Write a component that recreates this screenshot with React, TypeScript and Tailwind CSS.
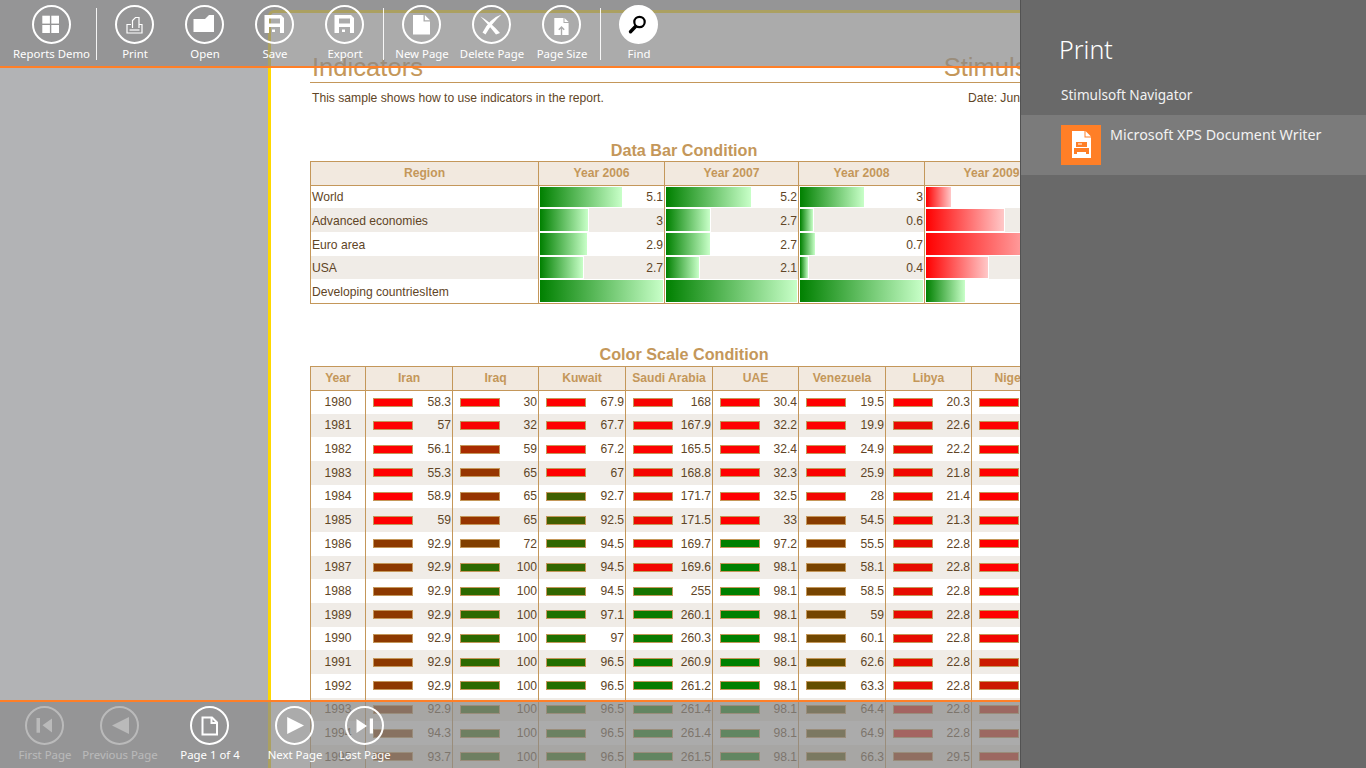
import React from "react";

const W = "#ffffff";

function Glyph({ name }: { name: string }) {
  const dim = "#ababab";
  switch (name) {
    case "grid":
      return (<g fill={W}><rect x="8.3" y="8.7" width="7.6" height="7.9" /><rect x="17.3" y="8.7" width="7.7" height="7.9" /><rect x="8.3" y="18" width="7.6" height="8" /><rect x="17.3" y="18" width="7.7" height="8" /></g>);
    case "print":
      return (<g fill="none" stroke={W} strokeWidth="1.2"><path d="M14 17.5H10V26H25V17.5H22" /><path d="M15.5 21V13.5L18.5 10.5H22V21" /><path d="M12.5 23H22.5" /></g>);
    case "folder":
      return <path fill={W} d="M6.5 12H18L22 8H27V25H6.5Z" />;
    case "save":
      return (<path fill={W} fillRule="evenodd" d="M7.5 8H24L27 11V26H7.5ZM12 11.5V16.5H23V11.5ZM12 20V26H15V22.5H18V25H15V26H23V20Z" />);
    case "page":
      return (<g fill={W}><path d="M9 8H19.5V14.5H26V27.5H9Z" /><path d="M20.8 8L26 13.2H20.8Z" /></g>);
    case "delete":
      return (<g fill={W}><path d="M27.5 7.5Q16 11 8.5 25.5L11.5 27.5Q18 16 27.5 7.5Z" /><path d="M6.5 9.5Q16 14.5 26 26L22 27.5Q14 17 6.5 9.5Z" /></g>);
    case "size":
      return (<g><path fill={W} d="M10.3 11H19.5V16H24.6V28H10.3Z" /><path fill={W} d="M20.5 11L24.6 15H20.5Z" /><path fill="none" stroke={dim} strokeWidth="1.4" d="M17.5 28V20.5M14.8 22.8L17.5 20L20.2 22.8" /></g>);
    case "find":
      return (<g fill="none" stroke="#000000"><circle cx="18.5" cy="15" r="5.2" strokeWidth="2.2" /><path d="M14.5 19.5L9.5 24.7" strokeWidth="3.4" strokeLinecap="round" /></g>);
    case "first":
      return (<g fill={W}><rect x="9.5" y="10" width="3.5" height="14.7" /><path d="M15.5 17.3L25 10.5V24.5Z" /></g>);
    case "prev":
      return <path fill={W} d="M10 17.5L27 9V26Z" />;
    case "pageline":
      return (<g fill="none" stroke={W} strokeWidth="2"><path d="M10.5 9.5H20L25 14.5V26.5H10.5Z" /><path d="M19.5 9.5V15H25" /></g>);
    case "next":
      return <path fill={W} d="M10.2 9L27 17.5L10.2 26Z" />;
    case "last":
      return (<g fill={W}><path d="M9.5 11L20 18L9.5 25Z" /><rect x="22.8" y="10.5" width="3.2" height="15" /></g>);
    default:
      return null;
  }
}

function Tool({ label, icon, cls, filled = false, dim = false, flush = false }: { label: string; icon: string; cls: string; filled?: boolean; dim?: boolean; flush?: boolean }) {
  return (
    <div className={`flex flex-none flex-col items-center ${cls} ${dim ? "opacity-35" : ""}`}>
      <div className={`w-[39px] h-[39px] flex-none rounded-full border-2 border-white ${filled ? "bg-white" : ""}`}>
        <svg viewBox="0 0 35 35" className="block w-[35px] h-[35px]"><Glyph name={icon} /></svg>
      </div>
      <div className={`mt-[2px] whitespace-nowrap text-[11.4px] leading-[16px] text-white ${flush ? "" : "pl-[2px]"}`}>{label}</div>
    </div>
  );
}

const Sep = ({ cls }: { cls: string }) => <div className={`flex-none w-px h-[52px] mt-[3px] bg-white/90 ${cls}`} />;

const BORDER = "border-[#c4975a]";

const t1Cols = ["w-[126px]", "w-[134px]", "w-[126px]", "w-[134px]"];
const t1Rows = [
  { name: "World", h: "h-[22px]", bg: "bg-white", cells: [[84, "5.1"], [87, "5.2"], [66, "3"], [27, ""]] },
  { name: "Advanced economies", h: "h-[24px]", bg: "bg-[#f0ece7]", cells: [[50, "3"], [46, "2.7"], [15, "0.6"], [80, ""]] },
  { name: "Euro area", h: "h-[24px]", bg: "bg-white", cells: [[49, "2.9"], [46, "2.7"], [17, "0.7"], [125, ""]] },
  { name: "USA", h: "h-[23px]", bg: "bg-[#f0ece7]", cells: [[45, "2.7"], [35, "2.1"], [10, "0.4"], [64, ""]] },
  { name: "Developing countriesItem", h: "h-[24px]", bg: "bg-white", cells: [[125, ""], [133, ""], [125, ""], [41, ""]] },
] as const;

const t2Widths = ["w-[87px]", "w-[86px]", "w-[87px]", "w-[87px]", "w-[86px]", "w-[87px]", "w-[86px]", "w-[87px]"];
const t2Heads = ["Iran", "Iraq", "Kuwait", "Saudi Arabia", "UAE", "Venezuela", "Libya", "Nigeria"];
const ranges: [number, number][] = [[62, 131], [30, 115], [68, 101], [165, 264], [33, 97], [25, 88], [20.5, 45], [0, 1]];
const nigeria = [0, 0, 0, 0, 0, 0, 0, 0, 0, 0, 0.05, 0.2, 0.2, 0.2, 0.2, 0.2];
const t2Data: number[][] = [
  [1980, 58.3, 30, 67.9, 168, 30.4, 19.5, 20.3],
  [1981, 57, 32, 67.7, 167.9, 32.2, 19.9, 22.6],
  [1982, 56.1, 59, 67.2, 165.5, 32.4, 24.9, 22.2],
  [1983, 55.3, 65, 67, 168.8, 32.3, 25.9, 21.8],
  [1984, 58.9, 65, 92.7, 171.7, 32.5, 28, 21.4],
  [1985, 59, 65, 92.5, 171.5, 33, 54.5, 21.3],
  [1986, 92.9, 72, 94.5, 169.7, 97.2, 55.5, 22.8],
  [1987, 92.9, 100, 94.5, 169.6, 98.1, 58.1, 22.8],
  [1988, 92.9, 100, 94.5, 255, 98.1, 58.5, 22.8],
  [1989, 92.9, 100, 97.1, 260.1, 98.1, 59, 22.8],
  [1990, 92.9, 100, 97, 260.3, 98.1, 60.1, 22.8],
  [1991, 92.9, 100, 96.5, 260.9, 98.1, 62.6, 22.8],
  [1992, 92.9, 100, 96.5, 261.2, 98.1, 63.3, 22.8],
  [1993, 92.9, 100, 96.5, 261.4, 98.1, 64.4, 22.8],
  [1994, 94.3, 100, 96.5, 261.4, 98.1, 64.9, 22.8],
  [1995, 93.7, 100, 96.5, 261.5, 98.1, 66.3, 29.5],
];

function scale(t: number) {
  const c = Math.max(0, Math.min(1, t));
  return `rgb(${Math.round(255 * (1 - c))},${Math.round(128 * c)},0)`;
}

function DataBarTable() {
  return (
    <div className={`flex-none w-[749px] border-t border-b border-r ${BORDER} text-[12.13px] text-[#5f4526]`}>
      <div className={`flex h-[24px] border-b ${BORDER} bg-[#f2e9df] font-bold text-[#c4975a]`}>
        <div className={`w-[228px] flex-none border-l ${BORDER} flex items-center justify-center`}>Region</div>
        {["Year 2006", "Year 2007", "Year 2008", "Year 2009"].map((y, i) => (
          <div key={y} className={`${t1Cols[i]} flex-none border-l ${BORDER} flex items-center justify-center`}>{y}</div>
        ))}
      </div>
      {t1Rows.map((r, ri) => (
        <div key={r.name} className={`flex ${r.h} ${r.bg}`}>
          <div className={`w-[228px] flex-none border-l ${BORDER} pl-px flex items-center`}>
            <span className={ri > 0 ? "pt-[2px]" : ""}>{r.name}</span>
          </div>
          {r.cells.map((c, ci) => (
            <div key={ci} className={`${t1Cols[ci]} flex-none border-l ${BORDER} flex justify-between items-center pr-px`}>
              <div
                className={`h-full flex-none border border-white bg-linear-to-r/srgb ${ci === 3 && ri < 4 ? "from-[#ff0000] to-[#ffc8c8]" : "from-[#008000] to-[#c8ffc8]"}`}
                style={{ width: c[0] }}
              />
              <span className={ri > 0 ? "pt-[2px]" : ""}>{c[1]}</span>
            </div>
          ))}
        </div>
      ))}
    </div>
  );
}

function ColorScaleTable() {
  return (
    <div className={`flex-none w-[749px] border-t border-r ${BORDER} text-[12.13px] text-[#5f4526]`}>
      <div className={`flex h-[24px] border-b ${BORDER} bg-[#f2e9df] font-bold text-[#c4975a]`}>
        <div className={`w-[55px] flex-none border-l ${BORDER} flex items-center justify-center`}>Year</div>
        {t2Heads.map((h, i) => (
          <div key={h} className={`${t2Widths[i]} flex-none border-l ${BORDER} flex items-center justify-center`}>{h}</div>
        ))}
      </div>
      {t2Data.map((row, ri) => (
        <div key={row[0]} className={`flex ${ri === 0 ? "h-[22.67px]" : "h-[23.67px]"} ${ri % 2 ? "bg-[#f0ece7]" : "bg-white"}`}>
          <div className={`w-[55px] flex-none border-l ${BORDER} flex items-center justify-center`}>{row[0]}</div>
          {t2Heads.map((h, ci) => {
            const v = row[ci + 1];
            const [lo, hi] = ranges[ci];
            const t = ci === 7 ? nigeria[ri] : (v - lo) / (hi - lo);
            return (
              <div key={h} className={`${t2Widths[ci]} flex-none border-l ${BORDER} flex items-center justify-between pl-[7px] pr-px`}>
                <div className={`w-[40px] h-[9px] flex-none border ${BORDER}`} style={{ backgroundColor: scale(t) }} />
                <span>{v}</span>
              </div>
            );
          })}
        </div>
      ))}
    </div>
  );
}

function Report() {
  return (
    <div className="flex-1 min-w-0 mt-[10px] bg-white border-l-[3px] border-t-[3px] border-[#ffd800] rounded-tl-[6px] overflow-hidden pl-[39px] pt-[39px] font-['Liberation_Sans',Arial,sans-serif]">
      <div className={`w-[746px] h-[31px] pl-[2px] border-b ${BORDER} flex justify-between text-[25.6px] leading-[30px] text-[#c4975a]`}>
        <span>Indicators</span>
        <span>Stimulsoft</span>
      </div>
      <div className="w-[748px] h-[30px] pl-[2px] pr-px flex justify-between text-[12.13px] leading-[30px] text-[#5f4526]">
        <span>This sample shows how to use indicators in the report.</span>
        <span>Date: June 2013</span>
      </div>
      <div className="w-[748px] mt-[27px] h-[20px] text-center text-[16.2px] leading-[20px] font-bold text-[#c4975a]">Data Bar Condition</div>
      <div className="mt-px"><DataBarTable /></div>
      <div className="w-[748px] mt-[40px] h-[20px] text-center text-[16.2px] leading-[20px] font-bold text-[#c4975a]">Color Scale Condition</div>
      <div className="mt-[2px]"><ColorScaleTable /></div>
    </div>
  );
}

function Flyout() {
  return (
    <div className="absolute right-0 top-0 bottom-0 w-[346px] bg-[#696969] border-l border-[#525252] text-white font-['Noto_Sans',sans-serif]">
      <div className="pl-[38px] pt-[31px] text-[25px] leading-[36px] font-light">Print</div>
      <div className="pl-[40px] mt-[18px] text-[13.6px] leading-[20px] text-[#f2f2f2]">Stimulsoft Navigator</div>
      <div className="mt-[10px] h-[60px] bg-[#7b7b7b] flex pl-[40px] pt-[10px]">
        <div className="w-[40px] h-[40px] flex-none bg-[#ff7f27]">
          <svg viewBox="0 0 40 40" className="block w-[40px] h-[40px]">
            <path fill="#ffffff" d="M11 6H23.5V12.5H30V33H11Z" />
            <path fill="#ffffff" d="M24.5 6L30 11.5H24.5Z" />
            <path fill="#ff7f27" d="M15 17H26V22H15ZM13 23H28V29H25V27H16V29H13Z" />
            <path fill="#ffffff" d="M17 18.5H21V19.5H17Z" />
          </svg>
        </div>
        <div className="ml-[9px] text-[14.3px] leading-[20px] text-[#f2f2f2] whitespace-nowrap">Microsoft XPS Document Writer</div>
      </div>
    </div>
  );
}

export default function App() {
  return (
    <div className="relative w-[1366px] h-[768px] overflow-hidden bg-[#b2b3b5] flex">
      <div className="w-[268px] flex-none" />
      <Report />

      <div className="absolute left-0 right-0 top-0 h-[68px] border-b-2 border-[#ff7f27] bg-[rgba(136,136,136,0.71)] flex pt-[5px] font-['Noto_Sans',sans-serif]">
        <Tool label="Reports Demo" icon="grid" cls="w-[77px] ml-[13px]" flush />
        <Sep cls="ml-[6px] mr-[2px]" />
        <Tool label="Print" icon="print" cls="w-[70px]" />
        <Tool label="Open" icon="folder" cls="w-[70px]" />
        <Tool label="Save" icon="save" cls="w-[70px]" />
        <Tool label="Export" icon="save" cls="w-[70px]" />
        <Sep cls="ml-[4px] mr-[2px]" />
        <Tool label="New Page" icon="page" cls="w-[70px]" />
        <Tool label="Delete Page" icon="delete" cls="w-[70px]" />
        <Tool label="Page Size" icon="size" cls="w-[70px]" />
        <Sep cls="ml-[4px] mr-[2px]" />
        <Tool label="Find" icon="find" cls="w-[70px]" filled />
      </div>

      <div className="absolute left-0 right-0 bottom-0 h-[68px] border-t-2 border-[#ff7f27] bg-[rgba(136,136,136,0.71)] flex pt-[4px] pl-[9px] font-['Noto_Sans',sans-serif]">
        <Tool label="First Page" icon="first" cls="w-[70px]" dim />
        <Tool label="Previous Page" icon="prev" cls="w-[80px]" dim />
        <Tool label="Page 1 of 4" icon="pageline" cls="w-[100px]" />
        <Tool label="Next Page" icon="next" cls="w-[70px]" />
        <Tool label="Last Page" icon="last" cls="w-[70px]" />
      </div>

      <Flyout />
    </div>
  );
}
